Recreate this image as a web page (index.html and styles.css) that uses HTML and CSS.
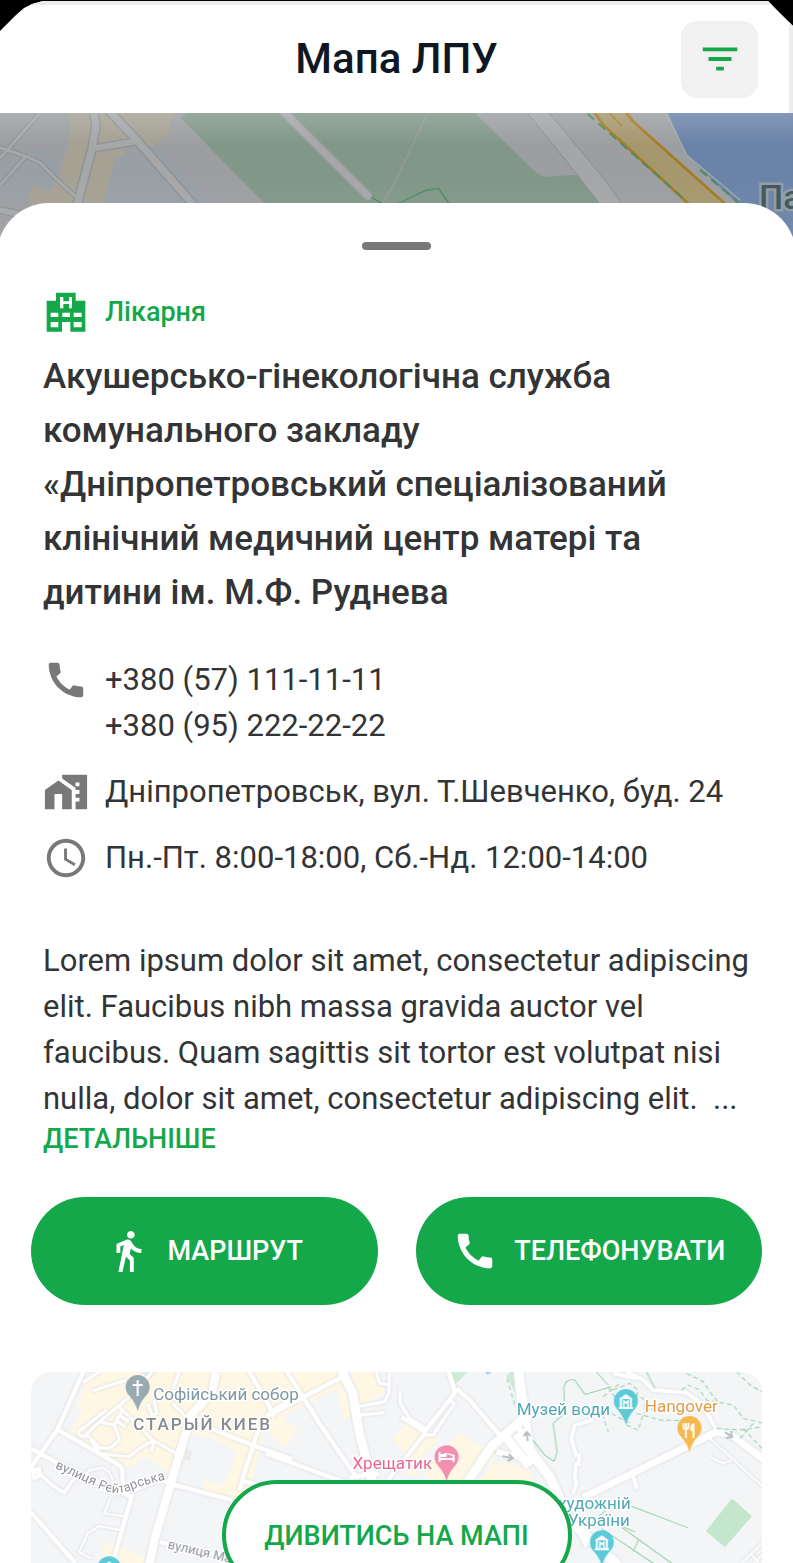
FILE: index.html
```html
<!DOCTYPE html>
<html lang="uk">
<head>
<meta charset="utf-8">
<meta name="viewport" content="width=device-width, initial-scale=1">
<title>Мапа ЛПУ</title>
<link rel="stylesheet" href="styles.css">
</head>
<body>
<div class="page">
  <header class="header">
    <h1 class="header-title">Мапа ЛПУ</h1>
    <button class="filter" type="button" aria-label="Фільтр">
      <svg class="icon" viewBox="0 0 24 24"><path d="M10 18h4v-2h-4v2zM3 6v2h18V6H3zm3 7h12v-2H6v2z"/></svg>
    </button>
  </header>

  <div class="hero">
    <svg class="hero-map" viewBox="0 113 793 125" preserveAspectRatio="xMidYMin slice" aria-hidden="true">
      <defs>
        <linearGradient id="haze" x1="0" y1="0" x2="0" y2="1">
          <stop offset="0" stop-color="#fff" stop-opacity=".17"/>
          <stop offset=".25" stop-color="#fff" stop-opacity="0"/>
          <stop offset=".5" stop-color="#fff" stop-opacity="0"/>
          <stop offset="1" stop-color="#fff" stop-opacity=".06"/>
        </linearGradient>
      </defs>
      <rect y="113" width="793" height="125" fill="#9c9ea1"/>
      <g transform="scale(.33333)">
        <path fill="#99a0a5" d="M0 480L120 440L180 500L170 560L60 600H0ZM350 480L470 440L640 610H310Z"/>
        <path fill="#a5a294" d="M205 339H525L508 375L515 390L460 440L410 425L300 445L380 450L368 468L345 470L310 612H85L95 557L150 570L178 530L213 400Z"/>
        <path fill="#819889" d="M560 339H1424L1590 500Q1620 534 1650 530L1720 524Q1745 526 1760 548L1800 610H793L542 354Z"/>
        <path fill="#6b83a9" d="M2000 339H2379V720H2310L2210 610L2060 465Z"/>
        <g class="hero-casing">
          <path stroke-width="16" d="M120 339L0 475M-10 440L75 468L120 488L180 548L226 588M75 472L0 556"/>
          <path stroke-width="25" d="M-10 628L70 645"/>
          <path stroke-width="31" d="M280 330L288 378L276 446L230 620M325 330L410 420L585 620"/>
          <path stroke-width="27" d="M276 446L408 424"/>
        </g>
        <g class="hero-road">
          <path stroke-width="9" d="M120 339L0 475M-10 440L75 468L120 488L180 548L226 588M75 472L0 556"/>
          <path stroke-width="17" d="M-10 628L70 645"/>
          <path stroke-width="22" d="M280 330L288 378L276 446L230 620M325 330L410 420L585 620"/>
          <path stroke-width="18" d="M276 446L408 424"/>
        </g>
        <path fill="none" stroke="#94979a" stroke-width="30" stroke-linecap="round" d="M850 335L1104 588"/>
        <path fill="none" stroke="#a6a7a9" stroke-width="22" stroke-linecap="round" d="M850 335L1104 588"/>
        <path fill="none" stroke="#96999b" stroke-width="5" d="M1284 339L1182 550L1148 610"/>
        <path fill="none" stroke="#4f8b61" stroke-width="4" d="M1114 592L1150 612M1190 612L1280 570L1316 566L1348 612"/>
        <path fill="#a5a6a8" stroke="#8b8d90" stroke-width="3" d="M1575 330L1700 484L1810 625H1875L1815 540L1640 330Z"/>
        <path fill="#a6986e" d="M1778 330L1810 375L2070 620H2180L1900 365L1872 330Z"/>
        <path fill="none" stroke="#a67a20" stroke-width="8" d="M1778 330L1810 375L2080 625M1872 330L1900 365L2185 620"/>
        <path fill="none" stroke="#a67a20" stroke-width="4" d="M1828 339L1866 378"/>
        <path fill="none" stroke="#4f8b61" stroke-width="6" stroke-dasharray="27 17" d="M1762 341L2060 604M2100 510L2220 612"/>
        <path fill="none" stroke="#9fabb0" stroke-width="4" d="M2000 339L2060 465L2220 600"/>
      </g>
      <rect y="113" width="793" height="125" fill="url(#haze)"/>
      <text class="hero-label" x="759" y="209">Парк</text>
    </svg>
  </div>

  <main class="sheet">
    <div class="handle"></div>

    <div class="info">
      <p class="category">
        <svg class="icon icon-hospital" viewBox="69 53 138 138" aria-hidden="true"><path fill-rule="evenodd" d="M108 64H167V88H196V181H151V152H126V181H80V88H108ZM120 77V111H130V98H147V111H156V77H147V90H130V77ZM92 124V137H115V124ZM127 124V137H150V124ZM161 124V137H185V124ZM92 152V168H115V152ZM161 152V168H185V152Z"/></svg>
        <span>Лікарня</span>
      </p>
      <h2 class="name">Акушерсько-гінекологічна служба комунального закладу «Дніпропетровський спеціалізований клінічний медичний центр матері та дитини ім. М.Ф. Руднева</h2>

      <ul class="contacts">
        <li class="contact">
          <svg class="icon" viewBox="0 0 24 24" aria-hidden="true"><path d="M20.01 15.38c-1.23 0-2.42-.2-3.53-.56-.35-.12-.74-.03-1.01.24l-1.57 1.97c-2.83-1.35-5.48-3.9-6.89-6.83l1.95-1.66c.27-.28.35-.67.24-1.02-.37-1.11-.56-2.3-.56-3.53 0-.54-.45-.99-.99-.99H4.19C3.65 3 3 3.24 3 3.99 3 13.28 10.73 21 20.01 21c.71 0 .99-.63.99-1.18v-3.45c0-.54-.45-.99-.99-.99z"/></svg>
          <div class="phones">
            <a href="tel:+380571111111">+380 (57) 111-11-11</a>
            <a href="tel:+380952222222">+380 (95) 222-22-22</a>
          </div>
        </li>
        <li class="contact">
          <svg class="icon" viewBox="0 0 24 24" aria-hidden="true"><path d="M1 11v10h5v-8h4v8h5V11L8 6z"/><path d="M10 3v1.97l7 5V11h2v2h-2v2h2v2h-2v4h6V3H10zm9 6h-2V7h2v2z"/></svg>
          <span>Дніпропетровськ, вул. Т.Шевченко, буд. 24</span>
        </li>
        <li class="contact">
          <svg class="icon" viewBox="0 0 24 24" aria-hidden="true"><path d="M11.99 2C6.47 2 2 6.48 2 12s4.47 10 9.99 10C17.52 22 22 17.52 22 12S17.52 2 11.99 2zM12 20c-4.42 0-8-3.58-8-8s3.58-8 8-8 8 3.58 8 8-3.58 8-8 8z"/><path d="M12.5 7H11v6l5.25 3.15.75-1.23-4.5-2.67z"/></svg>
          <span>Пн.-Пт. 8:00-18:00, Сб.-Нд. 12:00-14:00</span>
        </li>
      </ul>

      <p class="description">Lorem ipsum dolor sit amet, consectetur adipiscing elit. Faucibus nibh massa gravida auctor vel faucibus. Quam sagittis sit tortor est volutpat nisi nulla, dolor sit amet, consectetur adipiscing elit.&nbsp; ...</p>
      <a class="more" href="#details">ДЕТАЛЬНІШЕ</a>
    </div>

    <div class="actions">
      <button class="action" type="button">
        <svg class="icon" viewBox="0 0 24 24" aria-hidden="true"><path d="M13.5 5.5c1.1 0 2-.9 2-2s-.9-2-2-2-2 .9-2 2 .9 2 2 2zM9.8 8.9L7 23h2.1l1.8-8 2.1 2v6h2v-7.5l-2.1-2 .6-3C14.8 12 16.8 13 19 13v-2c-1.9 0-3.5-1-4.3-2.4l-1-1.6c-.4-.6-1-1-1.7-1-.3 0-.5.1-.8.1L6 8.3V13h2V9.6l1.8-.7"/></svg>
        МАРШРУТ
      </button>
      <button class="action" type="button">
        <svg class="icon" viewBox="0 0 24 24" aria-hidden="true"><path d="M20.01 15.38c-1.23 0-2.42-.2-3.53-.56-.35-.12-.74-.03-1.01.24l-1.57 1.97c-2.83-1.35-5.48-3.9-6.89-6.83l1.95-1.66c.27-.28.35-.67.24-1.02-.37-1.11-.56-2.3-.56-3.53 0-.54-.45-.99-.99-.99H4.19C3.65 3 3 3.24 3 3.99 3 13.28 10.73 21 20.01 21c.71 0 .99-.63.99-1.18v-3.45c0-.54-.45-.99-.99-.99z"/></svg>
        ТЕЛЕФОНУВАТИ
      </button>
    </div>

    <section class="map-card">
      <svg class="map" viewBox="32 1372 730 191" preserveAspectRatio="xMidYMin slice" role="img" aria-label="Мапа">
        <defs>
          <g id="museum">
            <path fill="#5bcbd9" d="M0 35Q-2 27-8 20A12 12 0 1 1 8 20Q2 27 0 35Z"/>
            <path fill="#fff" d="M-7 9L0 4L7 9ZM-7 17H7V19H-7ZM-6 9H-4V18H-6ZM4 9H6V18H4Z"/>
            <path fill="none" stroke="#fff" stroke-width="1.5" d="M-2 17V11L0 13L2 11V17"/>
          </g>
        </defs>
        <rect x="32" y="1372" width="730" height="600" fill="#f4f5f7"/>
        <g transform="translate(20 1360) scale(.33333)" fill="#fef7e3">
          <path d="M215 36H800V195L735 205L700 360L680 400L640 415L550 388L555 360L610 375L655 275L570 230L510 220L450 340L385 290L330 320L150 225L190 150L175 135Z"/>
          <path d="M250 545L300 560L375 590L370 620H250Z"/>
        </g>
        <g transform="translate(270 1360) scale(.33333)" fill="#fef7e3">
          <path d="M0 36H215L245 170L225 175L200 90L120 125L20 175L88 205L45 260L0 220Z"/>
          <path d="M250 36H320L345 100L265 140L245 90ZM450 345L370 235L400 200L450 190L510 240L460 285L400 340ZM460 335L570 220L680 280L600 375H500ZM670 310L780 325V390H610Z"/>
        </g>
        <path fill="#fef7e3" d="M500 1462L530 1470L534 1485H490Z"/>
        <path fill="#cdebd6" d="M448 1372H468L456 1384ZM510 1372H515V1392L507 1376Z"/>
        <path fill="#c3e6cd" d="M706 1531L732 1498L752 1516L725 1547Z"/>
        <path fill="#aecbfa" d="M485 1372H492L488 1375Z"/>
        <g fill="#e9ebee"><path d="M140 1372H158L150 1379Z"/><path d="M187 1449L193 1451L191 1461L185 1459Z"/></g>
        <g class="roads">
          <g transform="translate(20 1360) scale(.33333)">
            <path stroke-width="14" d="M195 30L115 208L30 330M115 208L300 315Q312 322 310 345L312 395M30 262L110 306L340 412M30 450L170 609M340 400L280 609M340 390L410 362L450 364"/>
            <path stroke-width="11" d="M30 330L60 340L100 375L135 398L160 362L190 340M40 330L60 325L65 345L45 355Z"/>
            <path stroke-width="10" d="M190 68L240 36M220 92L320 60M262 150L190 205Q170 215 185 228L215 230M200 225L240 185L285 195L302 240L270 265L240 262L215 235M240 185L320 120L400 36M285 195L310 150M300 140L400 240L475 282M405 245L395 275M300 165L330 185M293 182L320 202M215 240L240 280L330 290L365 262L405 240M385 130L398 165L412 160L405 120M460 90L480 36M460 130L500 170"/>
            <path stroke-width="26" d="M590 36L580 95L515 165L455 370L405 540L390 620"/>
            <path stroke-width="14" d="M560 200L700 255L820 298M690 36L735 110L765 170M810 120L750 160L715 215L668 360M668 360L760 392M450 370L640 420M420 545L620 590M670 360L660 390"/>
            <path stroke-width="7" d="M190 365L210 330L250 322L270 335L300 410M275 410L255 460L320 468M310 510L240 498L205 520L180 575L215 595"/>
          </g>
          <g transform="translate(270 1360) scale(.33333)">
            <path stroke-width="14" d="M-10 170L220 50M50 30L150 190L260 350M-10 280L240 372M240 352L330 340M355 360L470 215M465 215L395 170M465 215L555 100L550 75L535 30M560 85L600 120L690 225"/>
            <path stroke-width="28" d="M215 30L250 100L270 220L310 370"/>
            <path stroke-width="10" d="M320 36L330 70L360 75M360 36L358 100L345 125L265 140M272 165L345 158M392 90V130L420 175L470 205M465 225L490 225L555 130L535 120"/>
            <path stroke-width="28" d="M580 385L665 260L790 150M700 220L780 320"/>
            <path stroke-width="18" d="M740 190L800 290M680 275L790 300M740 30L755 160"/>
          </g>
          <g transform="translate(520 1360) scale(.33333)">
            <path stroke-width="30" d="M-10 220L90 350L150 480L300 620"/>
            <path stroke-width="22" d="M0 30L20 180L40 310M190 412L590 215L640 228L740 305"/>
            <path stroke-width="12" d="M340 350L352 388M140 440L200 560M320 36L370 60L400 90L500 98L545 130L590 210M220 180L165 195L155 235L170 290M165 285H178V310H165M170 310L165 345L170 370L160 400M280 40L350 55"/>
            <path stroke-width="6" d="M570 235L735 385M570 290L610 310L635 300M665 609L735 540M700 609L735 575M690 580L715 605"/>
          </g>
        </g>
        <g class="trail" transform="translate(520 1360) scale(.33333)">
          <path d="M40 240L75 285L103 304L112 275L100 190L135 160L132 85Q135 55 165 60L195 103L275 80M230 36L265 75M380 36L405 85M335 438L505 503M260 450L235 470M355 540L340 575M345 515L300 495M290 490L455 609M245 505L400 609"/>
          <path stroke-dasharray="14 9" d="M265 80L290 120M280 90L330 70L355 90L345 130M250 110L300 70M240 140L265 215M320 195L355 210L370 160L410 140M350 160L420 180L520 182M485 90L505 75L540 90L560 120L640 135L670 175L725 188M500 40L550 65L580 110L600 130M650 36L690 75L725 95M590 205L670 210L725 200M660 235L700 190M670 205L725 265M320 95L370 115L380 160M255 150L330 190M-38 55L-15 135"/>
        </g>
        <g fill="none" stroke="#b6bec2" stroke-width="2">
          <path d="M503 1456L512 1458M509 1454L513 1458L508 1461M528 1441L527 1433M524 1436L527 1432L531 1436M725 1432L731 1436M731 1431L732 1437L726 1438"/>
        </g>

        <g transform="translate(138.500 1376)">
          <path fill="#9aaab2" d="M0 35Q-2 27-8 20A12 12 0 1 1 8 20Q2 27 0 35Z"/>
          <path fill="none" stroke="#fff" stroke-width="2" d="M0 4V20M-5 9H5"/>
        </g>
        <g transform="translate(447 1445)">
          <path fill="#f48fb1" d="M0 36Q-2 28-8 21A12 12 0 1 1 8 21Q2 28 0 36Z"/>
          <path fill="#fff" d="M-8 7H-6V13H6V11L0 9V12H-6V9H-2V8H1L8 10V17H6V15H-6V17H-8Z"/>
        </g>
        <use href="#museum" x="626" y="1390"/>
        <use href="#museum" x="602" y="1531"/>
        <use href="#museum" x="110" y="1557"/>
        <g transform="translate(689.500 1417)">
          <path fill="#f6b84b" d="M0 35Q-2 27-8 20A12 12 0 1 1 8 20Q2 27 0 35Z"/>
          <path fill="none" stroke="#fff" stroke-width="1.800" d="M-6 6V10Q-6 12-3.500 12T-1 10V6M-3.500 6V21"/>
          <path fill="#fff" d="M5 6V21H3V14H1Q0 7 5 6Z"/>
        </g>

        <path id="street" fill="none" d="M56 1468Q72 1475 94 1485Q116 1498 134 1489Q146 1484 172 1478"/>
        <g class="labels">
          <text class="place church" x="154" y="1400">Софійський собор</text>
          <text class="district" x="134" y="1430">СТАРЫЙ КИЕВ</text>
          <text class="street"><textPath href="#street">вулиця Рейтарська</textPath></text>
          <text class="street" transform="translate(168 1548) rotate(13)">вулиця Мала</text>
          <text class="place hotel" x="353" y="1469">Хрещатик</text>
          <text class="place water" x="517" y="1415">Музей води</text>
          <text class="place food" x="645" y="1412">Hangover</text>
          <text class="place water" x="631" y="1509" text-anchor="end">художній</text>
          <text class="place water" x="630" y="1526" text-anchor="end">України</text>
        </g>
      </svg>
      <a class="open-map" href="#map">ДИВИТИСЬ НА МАПІ</a>
    </section>
  </main>
</div>
</body>
</html>
```

FILE: styles.css
```css
* {
  box-sizing: border-box;
}

body {
  margin: 0;
  background: #000;
  color: #333436;
  font-family: Roboto, "Noto Sans", sans-serif;
  font-size: 31px;
  line-height: 46px;
}

h1,
h2,
p,
ul {
  margin: 0;
  padding: 0;
}

a {
  color: inherit;
  text-decoration: none;
}

button {
  border: 0;
  font: inherit;
  cursor: pointer;
}

.page {
  display: flex;
  flex-direction: column;
  min-height: 100vh;
  overflow: hidden;
}

.icon {
  flex: none;
  width: 46px;
  height: 46px;
  fill: #787878;
}

.header {
  display: grid;
  grid-template-columns: 77px 1fr 77px;
  align-items: center;
  height: 112px;
  margin-top: 1px;
  padding: 4px 35px 0;
  background: #fff;
  box-shadow: inset -4px 4px #eeebee;
  clip-path: polygon(43px 0, calc(100% - 25px) 0, 100% 25px, 100% 100%, 0 100%, 0 30px, 16px 14px, 24px 7px, 32px 3px);
}

.header-title {
  grid-column: 2;
  color: #0f1822;
  font-size: 42px;
  font-weight: 500;
  line-height: 56px;
  text-align: center;
}

.filter {
  display: grid;
  place-items: center;
  height: 77px;
  padding: 0;
  border-radius: 16px;
  background: #f1f1f1;
}

.filter .icon {
  fill: #14a84b;
}

.hero {
  height: 125px;
  overflow: hidden;
}

.hero-map {
  display: block;
  width: 100%;
  height: 100%;
}

.hero-casing {
  fill: none;
  stroke: #8f9296;
}

.hero-road {
  fill: none;
  stroke: #a5a7a9;
}

.hero-label {
  fill: #475960;
  stroke: #929fa6;
  stroke-width: 5px;
  paint-order: stroke;
  font-size: 34px;
  font-weight: 500;
}

.sheet {
  display: flex;
  flex: 1;
  flex-direction: column;
  z-index: 1;
  margin: -35px -3px 0;
  padding: 39px 34px 0;
  border-radius: 52px 52px 0 0;
  background: #fff;
}

.handle {
  align-self: center;
  width: 69px;
  height: 8px;
  border-radius: 4px;
  background: #787878;
}

.info {
  margin-top: 39px;
  padding: 0 12px;
}

.category,
.contact {
  display: flex;
  align-items: flex-start;
  gap: 16px;
}

.category {
  color: #14a84b;
  font-size: 27px;
  font-weight: 500;
}

.category .icon {
  fill: #14a84b;
}

.name {
  margin-top: 15px;
  font-size: 35px;
  font-weight: 500;
  line-height: 54px;
}

.contacts {
  display: grid;
  gap: 20px;
  margin-top: 37px;
  list-style: none;
}

.phones {
  display: grid;
}

.description {
  margin-top: 57px;
}

.more {
  display: block;
  color: #14a84b;
  font-size: 27px;
  font-weight: 500;
  line-height: 34px;
}

.actions {
  display: grid;
  grid-template-columns: 1fr 1fr;
  gap: 38px;
  margin-top: 41px;
}

.action {
  display: flex;
  align-items: center;
  justify-content: center;
  gap: 16px;
  height: 108px;
  padding: 0;
  border-radius: 54px;
  background: #14a84b;
  color: #fff;
  font-size: 27px;
  font-weight: 500;
}

.action .icon {
  fill: #fff;
}

.map-card {
  position: relative;
  flex: 1 0 190px;
  height: 190px;
  margin-top: 67px;
  border-radius: 20px 20px 0 0;
  overflow: hidden;
}

.map {
  display: block;
  width: 100%;
  height: 100%;
}

.roads {
  fill: none;
  stroke: #fff;
  filter: drop-shadow(0 0 1px #cdd1d6);
}

.trail {
  fill: none;
  stroke: #90d3a5;
  stroke-width: 3px;
}

.labels {
  paint-order: stroke;
  stroke: #fff;
  stroke-width: 3px;
  stroke-linejoin: round;
}

.place {
  font-size: 17px;
}

.church {
  fill: #7f96a3;
}

.hotel {
  fill: #ec6694;
}

.water {
  fill: #4fa9b5;
}

.food {
  fill: #e59a46;
}

.district {
  fill: #868b90;
  font-size: 17px;
  font-weight: 500;
  letter-spacing: 2px;
}

.street {
  fill: #8e9297;
  font-size: 13px;
}

.open-map {
  position: absolute;
  top: 108px;
  left: 50%;
  width: 350px;
  height: 110px;
  border: 4px solid #14a84b;
  border-radius: 55px;
  background: #fff;
  color: #14a84b;
  font-size: 27px;
  font-weight: 500;
  line-height: 104px;
  text-align: center;
  translate: -50% 0;
}
```
